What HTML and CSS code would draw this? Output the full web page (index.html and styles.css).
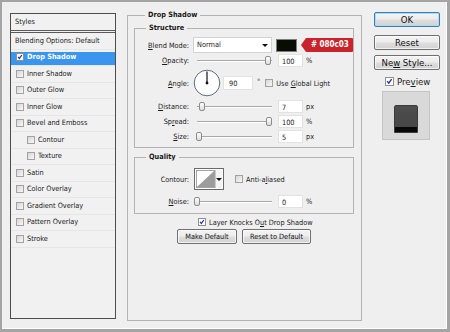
FILE: index.html
```html
<!DOCTYPE html>
<html>
<head>
<meta charset="utf-8">
<title>Layer Style</title>
<link rel="stylesheet" href="styles.css">
</head>
<body>
<div class="dialog">
  <div class="styles-list">
    <div class="list-head">Styles</div>
    <div class="row blend">Blending Options: Default</div>
    <div class="row selected"><span class="cb on"><svg viewBox="0 0 8 8"><path d="M1.4 3.8 L3.2 5.9 L6.4 1.3" /></svg></span>Drop Shadow</div>
    <div class="row"><span class="cb"></span>Inner Shadow</div>
    <div class="row"><span class="cb"></span>Outer Glow</div>
    <div class="row"><span class="cb"></span>Inner Glow</div>
    <div class="row"><span class="cb"></span>Bevel and Emboss</div>
    <div class="row sub"><span class="cb"></span>Contour</div>
    <div class="row sub"><span class="cb"></span>Texture</div>
    <div class="row"><span class="cb"></span>Satin</div>
    <div class="row"><span class="cb"></span>Color Overlay</div>
    <div class="row"><span class="cb"></span>Gradient Overlay</div>
    <div class="row"><span class="cb"></span>Pattern Overlay</div>
    <div class="row"><span class="cb"></span>Stroke</div>
  </div>

  <fieldset class="group outer">
    <legend>Drop Shadow</legend>

    <fieldset class="group structure">
      <legend>Structure</legend>
      <div class="frow r-blend">
        <span class="lbl"><u>B</u>lend Mode:</span>
        <div class="select">Normal<span class="arrow"></span></div>
        <div class="swatch"></div>
        <div class="tag"># 080c03</div>
      </div>
      <div class="frow r-slide">
        <span class="lbl"><u>O</u>pacity:</span>
        <div class="slider"><span class="thumb" style="left:75px"></span></div>
        <div class="num">100</div>
        <span class="unit">%</span>
      </div>
      <div class="frow r-angle">
        <span class="lbl"><u>A</u>ngle:</span>
        <svg class="dial" viewBox="0 0 28 28"><circle cx="14" cy="14" r="12.8" /><line x1="14" y1="14" x2="14" y2="2.5" /><circle class="dot" cx="14" cy="14" r="1.4" /></svg>
        <div class="num angle">90</div>
        <span class="deg">°</span>
        <span class="cb gl"></span>
        <span class="cbtext">Use <u>G</u>lobal Light</span>
      </div>
      <div class="frow r-slide">
        <span class="lbl"><u>D</u>istance:</span>
        <div class="slider"><span class="thumb" style="left:9px"></span></div>
        <div class="num">7</div>
        <span class="unit">px</span>
      </div>
      <div class="frow r-slide">
        <span class="lbl">Sp<u>r</u>ead:</span>
        <div class="slider"><span class="thumb" style="left:76px"></span></div>
        <div class="num">100</div>
        <span class="unit">%</span>
      </div>
      <div class="frow r-slide">
        <span class="lbl"><u>S</u>ize:</span>
        <div class="slider"><span class="thumb" style="left:6px"></span></div>
        <div class="num">5</div>
        <span class="unit">px</span>
      </div>
    </fieldset>

    <fieldset class="group quality">
      <legend>Quality</legend>
      <div class="frow r-contour">
        <span class="lbl">Contour:</span>
        <div class="contour">
          <svg class="curve" viewBox="0 0 21 20"><rect x="0.5" y="0.5" width="20" height="19" fill="#fff" stroke="#9a9a9a"/><polygon points="1,19 20,1 20,19" fill="#9c9c9c"/></svg>
          <span class="c-drop"><span class="arrow"></span></span>
        </div>
        <span class="cb aa"></span>
        <span class="cbtext">Anti-a<u>l</u>iased</span>
      </div>
      <div class="frow r-slide r-noise">
        <span class="lbl"><u>N</u>oise:</span>
        <div class="slider"><span class="thumb" style="left:4px"></span></div>
        <div class="num">0</div>
        <span class="unit">%</span>
      </div>
    </fieldset>

    <div class="knock">
      <span class="cb on"><svg viewBox="0 0 8 8"><path d="M1.4 3.8 L3.2 5.9 L6.4 1.3" /></svg></span>
      <span class="cbtext">Layer Knocks O<u>u</u>t Drop Shadow</span>
    </div>
    <div class="defaults">
      <button class="btn small">Make Default</button>
      <button class="btn small">Reset to Default</button>
    </div>
  </fieldset>

  <div class="side">
    <button class="btn big ok">OK</button>
    <button class="btn big reset">Reset</button>
    <button class="btn big newstyle">Ne<u>w</u> Style...</button>
    <div class="preview-check">
      <span class="cb on big-cb"><svg viewBox="0 0 8 8"><path d="M1.4 3.8 L3.2 5.9 L6.4 1.3" /></svg></span>
      <span class="ptext">Pre<u>v</u>iew</span>
    </div>
    <div class="preview-box">
      <div class="preview-square"></div>
    </div>
  </div>
</div>
</body>
</html>
```

FILE: styles.css
```css
* { box-sizing: border-box; }

html, body {
  margin: 0;
  padding: 0;
  background: #f0f0f0;
}

body {
  font-family: "DejaVu Sans Condensed", "Liberation Sans", Arial, sans-serif;
  font-stretch: condensed;
  font-size: 7.3px;
  color: #1a1a1a;
}

u { text-decoration: underline; text-underline-offset: 1px; }

.dialog {
  width: 450px;
  height: 332px;
  border: 2px solid #a4a4a4;
  border-right-width: 3px;
  border-bottom-width: 3px;
  background: #efefef;
  box-shadow: inset -1px -1px 0 #ffffff;
  display: flex;
  align-items: flex-start;
  padding: 8px 0 0 8px;
}

/* ---------- Styles list ---------- */
.styles-list {
  margin-top: 3px;
  width: 106px;
  height: 306px;
  border: 1px solid #4d4d4d;
  background: #f1f1f1;
  flex: none;
}

.list-head {
  height: 19px;
  line-height: 16px;
  padding-left: 4px;
  border-bottom: 3px double #5a5a5a;
}

.row {
  height: 16.5px;
  line-height: 16px;
  padding-left: 4px;
  border-bottom: 1px solid #e6e6e6;
  white-space: nowrap;
  display: flex;
  align-items: center;
}

.row.sub { padding-left: 15px; }

.row.selected {
  background: linear-gradient(#3a95ee, #3a95ee) no-repeat 0 2px / 100% 13px;
  color: #ffffff;
  font-weight: bold;
}

.row .cb { margin: 0 3px 0 1px; }

/* ---------- checkbox ---------- */
.cb {
  display: inline-block;
  flex: none;
  width: 8px;
  height: 8px;
  border: 1px solid #a2a2a2;
  background: linear-gradient(135deg, #d6d6d6, #f8f8f8);
}

.cb.on {
  background: #ffffff;
  border-color: #8e8f8f;
}

.cb svg {
  display: block;
  width: 6px;
  height: 6px;
}

.cb svg path {
  fill: none;
  stroke: #23389a;
  stroke-width: 1.6;
}

.cbtext { margin-left: 3px; white-space: nowrap; }

/* ---------- group boxes ---------- */
.group {
  margin: 0;
  min-width: 0;
  border: 1px solid #b3b3b3;
}

.group > legend {
  font-weight: bold;
  line-height: 10px;
  padding: 0 3px;
  margin-left: 11px;
}

.outer {
  flex: none;
  margin-left: 11px;
  width: 235px;
  height: 311px;
  padding: 3px 7px 0 6px;
}

.structure {
  width: 220px;
  height: 125px;
  padding: 4px 0 0 0;
}

.quality {
  margin-top: 4px;
  width: 220px;
  height: 62px;
  padding: 6px 0 0 0;
}

.frow {
  display: flex;
  align-items: center;
  white-space: nowrap;
}

.lbl {
  width: 54px;
  text-align: right;
  margin-right: 4px;
  flex: none;
}

.r-blend { height: 16px; }
.r-slide { height: 15px; }
.r-angle { height: 30.5px; }
.r-contour { height: 22px; }
.r-noise { margin-top: 4px; height: 14px; }

.select {
  width: 84px;
  height: 16px;
  background: #ffffff;
  border: 1px solid #d2d2d2;
  line-height: 14px;
  padding-left: 3px;
  display: flex;
  align-items: center;
  justify-content: space-between;
  padding-right: 3px;
}

.arrow {
  width: 0;
  height: 0;
  border-left: 3px solid transparent;
  border-right: 3px solid transparent;
  border-top: 3px solid #111;
}

.swatch {
  margin-left: 4px;
  width: 22px;
  height: 13px;
  background: #080c03;
  border: 1px solid #7d7d7d;
}

.tag {
  position: relative;
  z-index: 2;
  height: 14px;
  width: 50px;
  margin-left: 9px;
  background: #c9232c;
  color: #ffffff;
  font-weight: bold;
  font-size: 8px;
  line-height: 14px;
  padding-left: 5px;
  border-radius: 0 1px 1px 0;
}

.tag::before {
  content: "";
  position: absolute;
  left: -5px;
  top: 0;
  border-top: 7px solid transparent;
  border-bottom: 7px solid transparent;
  border-right: 5px solid #c9232c;
}

.slider {
  position: relative;
  width: 84px;
  height: 11px;
  flex: none;
}

.slider::before {
  content: "";
  position: absolute;
  left: 4px;
  right: 5px;
  top: 5px;
  height: 1px;
  background: #a8a8a8;
  box-shadow: 0 1px 0 #ffffff;
}

.thumb {
  position: absolute;
  top: 1px;
  width: 6px;
  height: 9px;
  margin-left: -3px;
  border: 1px solid #8c8c8c;
  border-radius: 2px;
  background: linear-gradient(#ffffff, #dcdcdc);
}

.num {
  margin-left: 1px;
  width: 25px;
  height: 13px;
  line-height: 13px;
  background: #ffffff;
  border: 1px solid #e2e2e2;
  padding-left: 3px;
  flex: none;
}

.unit { margin-left: 3px; }

.dial {
  width: 28px;
  height: 28px;
  flex: none;
}

.dial circle {
  fill: #ffffff;
  stroke: #5f6b85;
  stroke-width: 1;
}

.dial circle.dot { fill: #111; stroke: none; }

.dial line { stroke: #111; stroke-width: 1.2; }

.num.angle {
  margin-left: 2px;
  width: 30px;
  height: 14px;
  padding-left: 5px;
}

.deg { margin-left: 4px; margin-top: -4px; }

.cb.gl { margin-left: 5px; }

.contour {
  margin-left: 1px;
  display: flex;
  width: 30px;
  height: 22px;
  border: 1px solid #6b6b6b;
  background: #ffffff;
  padding: 1px;
}

.curve { width: 20px; height: 18px; display: block; }

.c-drop {
  flex: 1;
  display: flex;
  align-items: center;
  justify-content: center;
  border-left: 1px solid #c8c8c8;
  background: #f4f4f4;
}

.cb.aa { margin-left: 11px; }

.knock {
  display: flex;
  align-items: center;
  height: 12px;
  margin-top: 2px;
  padding-left: 64px;
}

.defaults {
  display: flex;
  justify-content: center;
  gap: 5px;
  margin-top: 1px;
}

.btn {
  font-family: "DejaVu Sans Condensed", "Liberation Sans", Arial, sans-serif;
  font-stretch: condensed;
  color: #111;
  border: 1px solid #707070;
  border-radius: 2px;
  background: linear-gradient(#f4f4f4, #ececec 48%, #dedede 52%, #d2d2d2);
  padding: 0;
  margin: 0;
  box-shadow: inset 0 0 0 1px rgba(255,255,255,0.7);
}

.btn.small {
  font-size: 7.3px;
  height: 15px;
}

.defaults .btn:first-child { width: 60px; }
.defaults .btn:last-child { width: 69px; }

/* ---------- right side ---------- */
.side {
  flex: none;
  margin-left: 12px;
  width: 66px;
  display: flex;
  flex-direction: column;
}

.btn.big {
  width: 66px;
  height: 15px;
  font-size: 9.5px;
  line-height: 12px;
}

.btn.ok {
  margin-top: 2px;
  border-color: #3c7fb1;
  box-shadow: inset 0 0 0 1px #a8dcf6;
}

.btn.reset { margin-top: 8px; }

.btn.newstyle { margin-top: 5px; }

.preview-check {
  margin-top: 5px;
  height: 12px;
  display: flex;
  align-items: center;
  padding-left: 11px;
  font-size: 9.5px;
}

.big-cb { width: 9px; height: 9px; }

.big-cb svg { width: 7px; height: 7px; }

.ptext { margin-left: 3px; }

.preview-box {
  margin-top: 4px;
  margin-left: 8px;
  width: 48px;
  height: 49px;
  background: #d9d9d9;
  border: 1px solid #c4c4c4;
  padding: 13px 0 0 11px;
}

.preview-square {
  width: 24px;
  height: 28px;
  border-radius: 2px 2px 0 0;
  background: linear-gradient(#4c4c4c, #474747 80%, #080808 80%);
  border: 1px solid #3a3a3a;
}
```
